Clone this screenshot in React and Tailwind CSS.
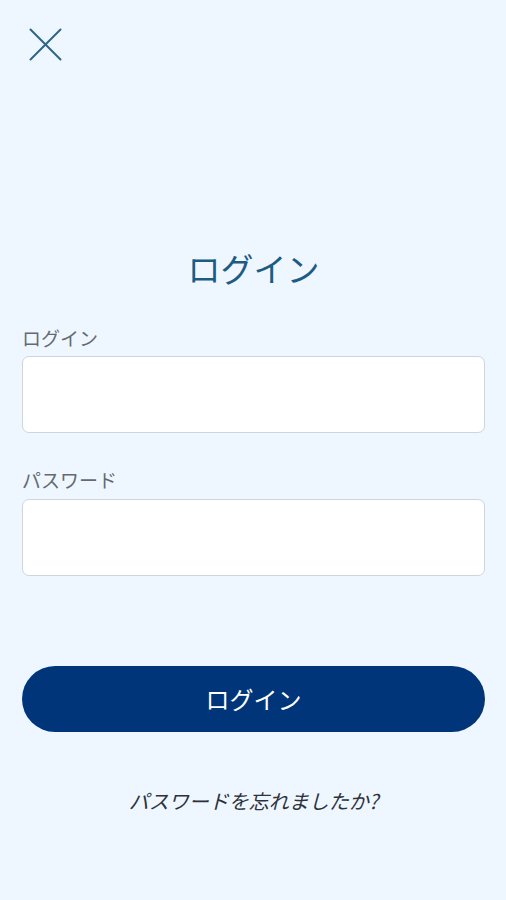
export default function App() {
  const jp = { fontFamily: '"Noto Sans CJK JP", "Noto Sans", sans-serif' };

  return (
    <div className="min-h-[900px] w-full bg-[#eef7ff]" style={jp}>
      {/* Fermer */}
      <div className="pt-[28px] pl-[29px]">
        <button className="block">
          <svg width="33" height="33" viewBox="0 0 33 33" fill="none">
            <path d="M1.5 1.5 L31.5 31.5 M31.5 1.5 L1.5 31.5" stroke="#2d6585" strokeWidth="2" strokeLinecap="round" />
          </svg>
        </button>
      </div>

      <div className="pl-[22px] pr-[21px]">
        <h1 className="mt-[187px] text-center text-[33px] leading-[40px] font-normal text-[#1d5b82]">ログイン</h1>

        <label className="block mt-[38px] text-[19px] leading-[24px] text-[#666a6e]">ログイン</label>
        <input className="mt-[6px] block w-full h-[77px] bg-white border border-[#cfd6da] rounded-[7px] px-3 outline-none" />

        <label className="block mt-[35px] text-[19px] leading-[24px] text-[#666a6e]">パスワード</label>
        <input type="password" className="mt-[7px] block w-full h-[77px] bg-white border border-[#cfd6da] rounded-[7px] px-3 outline-none" />

        <button className="mt-[90px] w-full h-[66px] rounded-full bg-[#00357a] text-white text-[24px] leading-none">ログイン</button>

        <p className="mt-[55px] text-center italic text-[20px] leading-[28px] text-[#2e3238]">パスワードを忘れましたか?</p>
      </div>
    </div>
  );
}
